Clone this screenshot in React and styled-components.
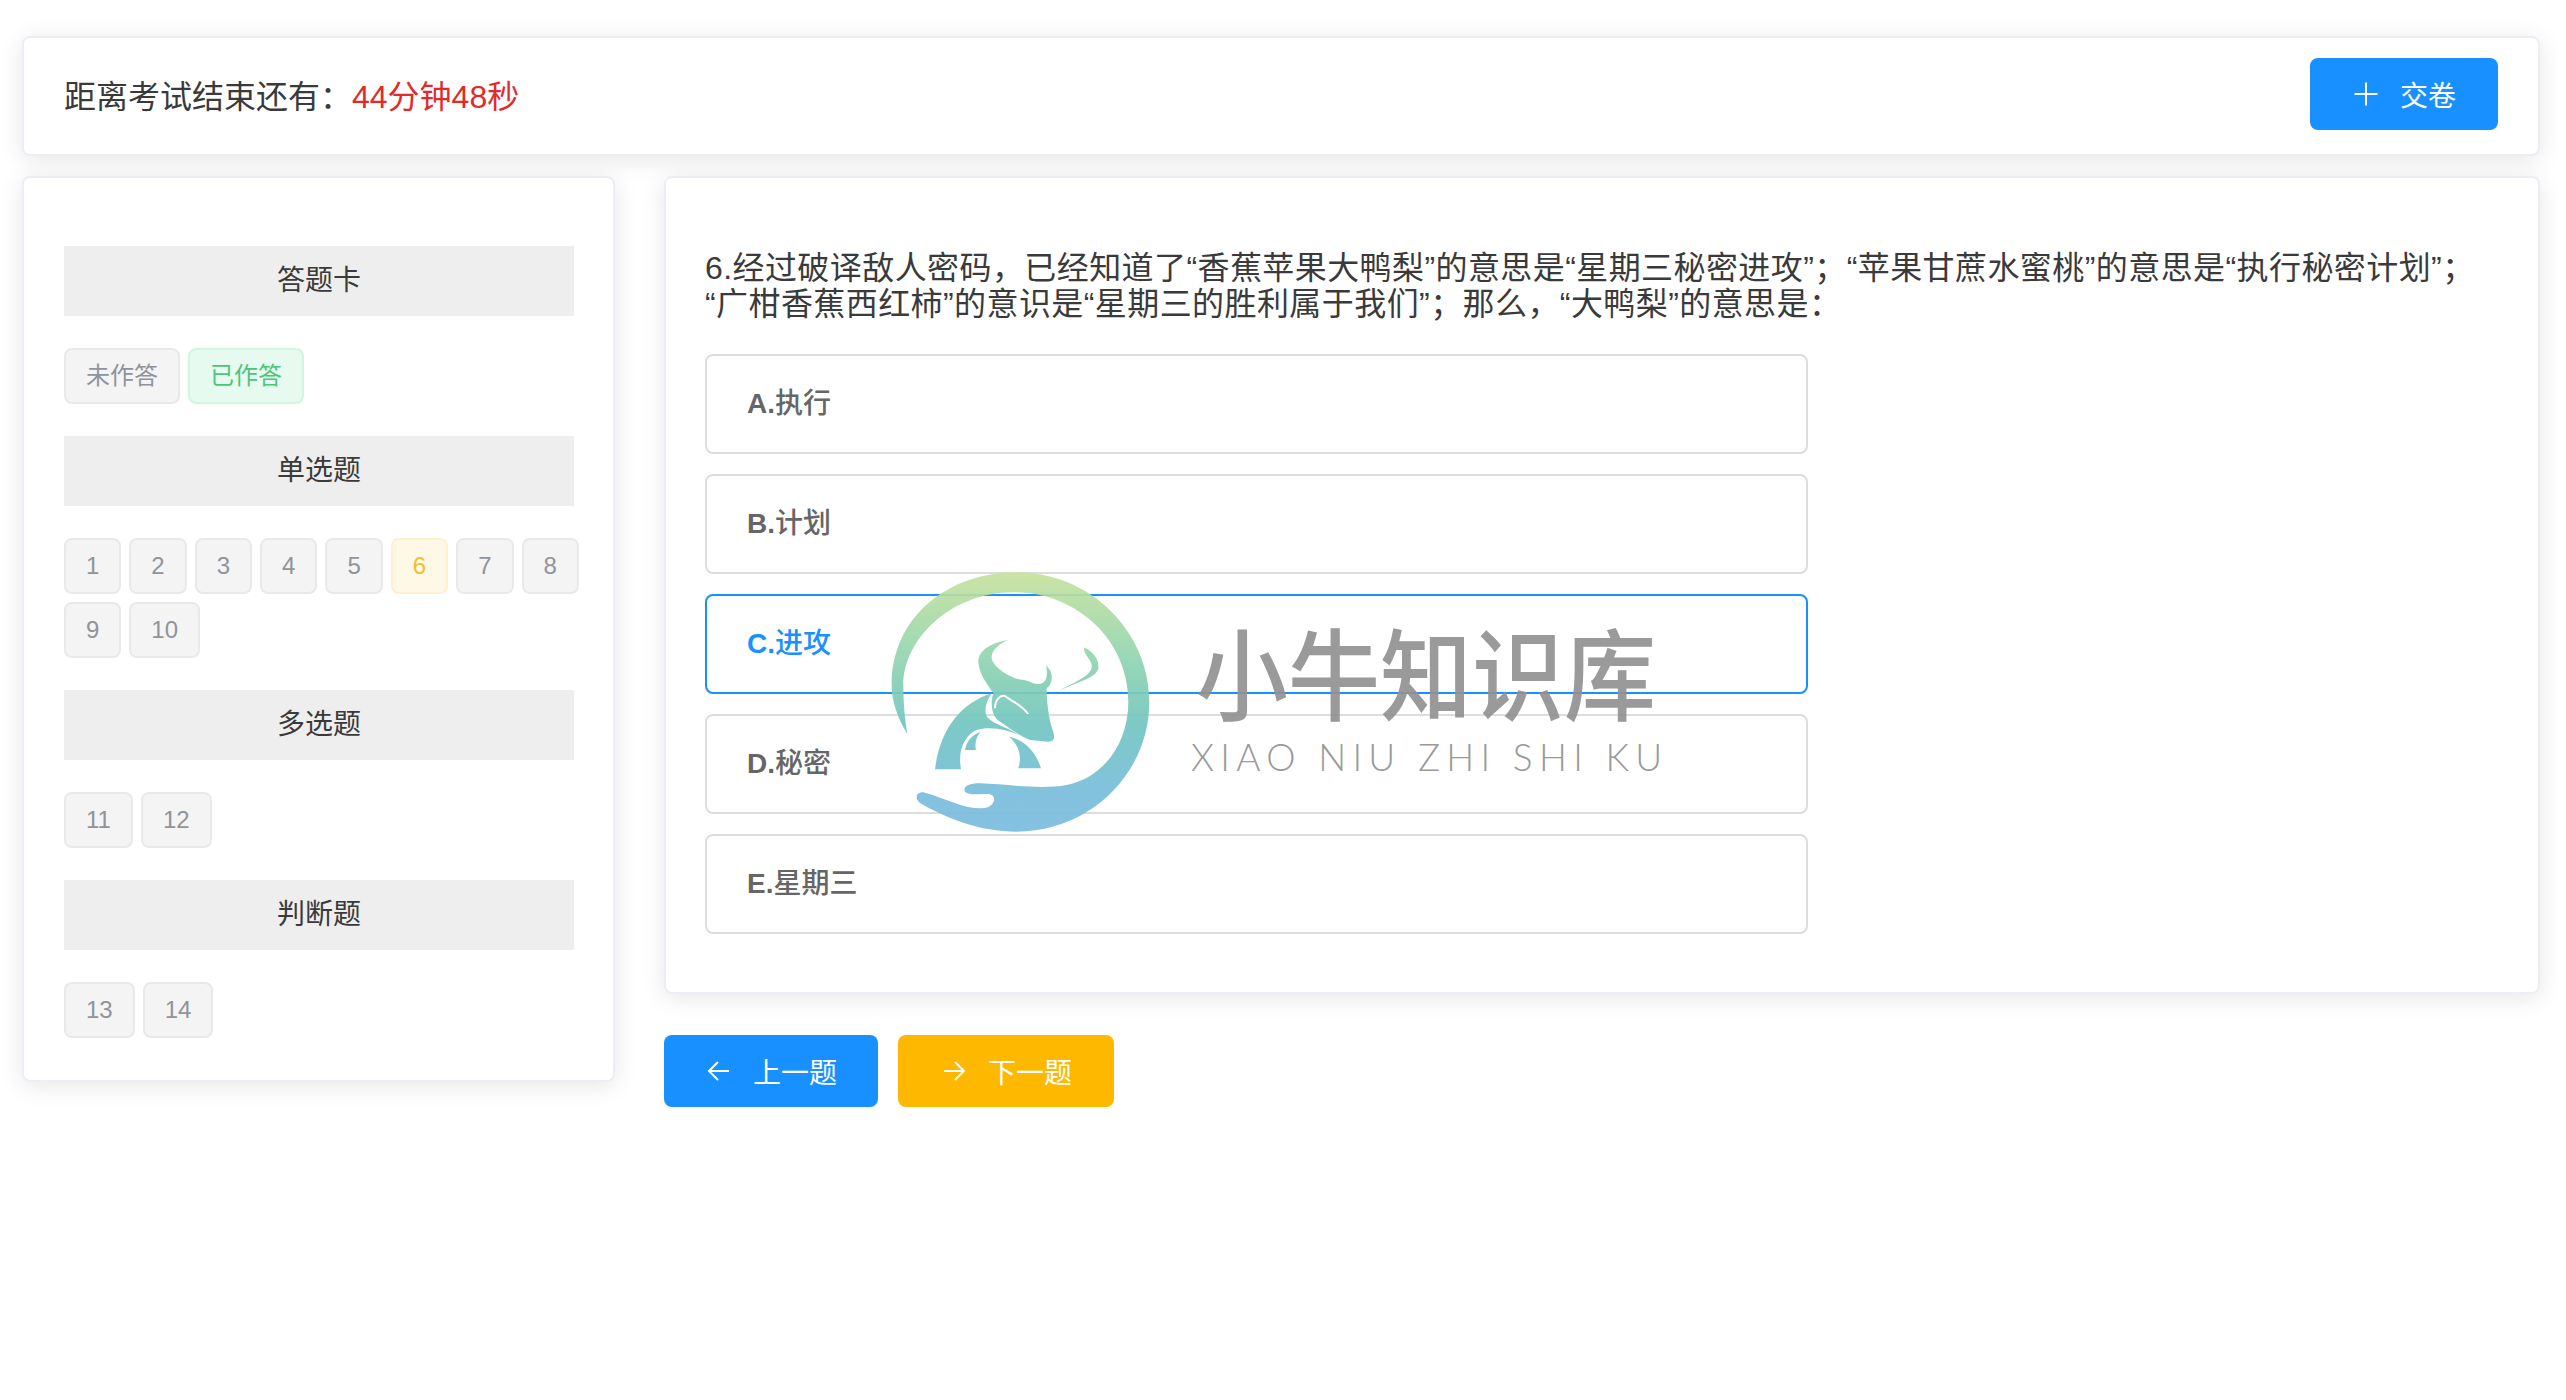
import React from "react";
import styled, { createGlobalStyle } from "styled-components";

const GlobalStyle = createGlobalStyle`
  body {
    margin: 0;
    background: #fff;
    font-family: "Liberation Sans", "Noto Sans CJK SC", sans-serif;
    color: #333;
  }
`;

const Page = styled.div`
  position: relative;
  height: 1400px;
  padding: 36px 26px 0 22px;
  box-sizing: border-box;
  overflow: hidden;
`;

const Card = styled.section`
  box-sizing: border-box;
  background: #fff;
  border: 2px solid #ebeef5;
  border-radius: 8px;
  box-shadow: 0 4px 24px rgba(0, 0, 0, 0.1);
`;

const Header = styled(Card)`
  height: 120px;
  padding: 20px 40px 0;
  display: flex;
  align-items: flex-start;
  justify-content: space-between;
`;

const Countdown = styled.div`
  padding-top: 3px;
  font-size: 32px;
  line-height: 72px;
  color: #3a3a3a;
`;

const Remaining = styled.span`
  color: #e32a2a;
`;

const Main = styled.div`
  display: grid;
  grid-template-columns: 593px 1876px;
  column-gap: 49px;
  margin-top: 20px;
  align-items: start;
`;

const Sidebar = styled(Card)`
  padding: 68px 39px 42px 40px;
  display: flex;
  flex-direction: column;
  gap: 32px;
`;

const SectionTitle = styled.div`
  height: 70px;
  line-height: 70px;
  background: #eee;
  text-align: center;
  font-size: 28px;
  color: #3a3a3a;
`;

const TagRow = styled.div`
  display: flex;
  flex-wrap: wrap;
  gap: 8px;
  margin-right: -10px;
`;

const tagColors = {
  info: { bg: "#f4f4f5", border: "#e9e9eb", color: "#909399" },
  success: { bg: "#e7faf0", border: "#d0f5e0", color: "#4cc47a" },
  warning: { bg: "#fff8e6", border: "#fff1cc", color: "#ecc035" },
};

const Tag = styled.span`
  box-sizing: border-box;
  height: 56px;
  line-height: 52px;
  padding: 0 20px;
  font-size: 24px;
  border-radius: 8px;
  border: 2px solid ${(p) => tagColors[p.$kind || "info"].border};
  background: ${(p) => tagColors[p.$kind || "info"].bg};
  color: ${(p) => tagColors[p.$kind || "info"].color};
`;

const Content = styled.div`
  display: flex;
  flex-direction: column;
`;

const QuestionCard = styled(Card)`
  height: 818px;
  padding: 72px 39px 0;
`;

const Question = styled.p`
  margin: 0 0 32px;
  font-size: 32px;
  line-height: 36px;
  letter-spacing: 0.42px;
  color: #3a3a3a;
`;

const Options = styled.div`
  display: flex;
  flex-direction: column;
  gap: 20px;
  width: 1103px;
`;

const Option = styled.div`
  box-sizing: border-box;
  height: 100px;
  line-height: 96px;
  padding: 0 40px;
  font-size: 28px;
  font-weight: 500;
  border-radius: 8px;
  border: 2px solid ${(p) => (p.$active ? "#1890ff" : "#ddd")};
  color: ${(p) => (p.$active ? "#1890ff" : "#666")};
`;

const OptionKey = styled.span`
  font-weight: 700;
`;

const NavRow = styled.div`
  display: flex;
  gap: 20px;
  margin-top: 41px;
`;

const Button = styled.button`
  height: 72px;
  padding: 0 ${(p) => p.$pad || 42}px;
  display: inline-flex;
  align-items: center;
  gap: 20px;
  border: 0;
  border-radius: 8px;
  background: ${(p) => p.$bg || "#1890ff"};
  color: #fff;
  font-family: inherit;
  font-size: 28px;
`;

const Watermark = styled.div`
  position: absolute;
  left: 880px;
  top: 560px;
  display: flex;
  gap: 31px;
  opacity: 0.92;
  pointer-events: none;
`;

const BrandText = styled.div`
  width: 480px;
  padding-top: 60px;
  color: #929292;
`;

const BrandName = styled.div`
  margin-left: 5px;
  font-size: 100px;
  font-weight: 500;
  line-height: 116px;
  white-space: nowrap;
  transform: scaleX(0.92);
  transform-origin: left center;
`;

const BrandLatin = styled.div`
  margin-top: -1px;
  font-family: Lato, sans-serif;
  font-weight: 300;
  font-size: 37px;
  line-height: 44px;
  letter-spacing: 6.3px;
  white-space: nowrap;
`;

const Icon = ({ d }) => (
  <svg width="28" height="28" viewBox="0 0 28 28" fill="none" stroke="currentColor" strokeWidth="2">
    <path d={d} />
  </svg>
);

const Logo = () => (
  <svg width="280" height="280" viewBox="0 0 840 840">
    <defs>
      <linearGradient id="logoFill" gradientUnits="userSpaceOnUse" x1="0" y1="37" x2="0" y2="815">
        <stop offset="0" stopColor="#c7e29c" />
        <stop offset="0.32" stopColor="#93d5b0" />
        <stop offset="0.58" stopColor="#72c6c0" />
        <stop offset="0.85" stopColor="#79bddc" />
        <stop offset="1" stopColor="#7bbce0" />
      </linearGradient>
    </defs>
    <g fill="url(#logoFill)">
      <path d="M82 522C50 470 35 420 35 375C35 170 205 37 410 37C630 37 808 215 808 425C808 640 630 815 410 815C300 815 200 775 125 732C100 718 108 692 135 698C190 712 245 745 305 745C345 745 355 705 325 702C300 700 270 708 255 695C248 680 265 670 300 670C380 672 480 690 560 675C680 650 745 540 745 425C745 240 590 97 400 97C210 97 70 240 70 375C70 430 75 480 82 522Z" />
      <path d="M165 628L243 628C232 570 255 525 290 510C330 497 385 510 415 525C390 505 345 495 325 475C310 460 315 430 335 400C240 430 180 510 165 628Z" />
      <path d="M385 240C335 248 295 270 295 305C297 345 325 375 340 400C330 430 335 470 360 485C385 500 420 530 450 540L505 545C525 545 525 530 518 510C505 475 500 420 500 385C515 375 520 350 510 330L498 315C505 345 500 372 475 372C455 372 445 360 430 360C400 360 340 325 335 295C333 270 360 250 385 240Z" />
      <path d="M255 570C258 545 275 525 302 515C285 535 285 555 288 570Z" />
      <path d="M388 530C435 540 470 580 483 625L415 625C425 590 420 560 388 530Z" />
      <path d="M612 262C640 275 658 300 655 325C650 355 590 365 533 396C570 370 640 350 635 315C632 295 610 285 612 262Z" />
    </g>
    <path d="M345 445C345 420 360 405 375 408C395 425 420 430 445 462" fill="none" stroke="#fff" strokeWidth="6" />
  </svg>
);

const singles = [1, 2, 3, 4, 5, 6, 7, 8, 9, 10];
const options = [
  ["A.", "执行"],
  ["B.", "计划"],
  ["C.", "进攻"],
  ["D.", "秘密"],
  ["E.", "星期三"],
];

export default function App() {
  return (
    <Page>
      <GlobalStyle />
      <Header>
        <Countdown>
          距离考试结束还有：<Remaining>44分钟48秒</Remaining>
        </Countdown>
        <Button>
          <Icon d="M14 2.5v23M2.5 14h23" />
          交卷
        </Button>
      </Header>
      <Main>
        <Sidebar>
          <SectionTitle>答题卡</SectionTitle>
          <TagRow>
            <Tag>未作答</Tag>
            <Tag $kind="success">已作答</Tag>
          </TagRow>
          <SectionTitle>单选题</SectionTitle>
          <TagRow>
            {singles.map((n) => (
              <Tag key={n} $kind={n === 6 ? "warning" : "info"}>
                {n}
              </Tag>
            ))}
          </TagRow>
          <SectionTitle>多选题</SectionTitle>
          <TagRow>
            <Tag>11</Tag>
            <Tag>12</Tag>
          </TagRow>
          <SectionTitle>判断题</SectionTitle>
          <TagRow>
            <Tag>13</Tag>
            <Tag>14</Tag>
          </TagRow>
        </Sidebar>
        <Content>
          <QuestionCard>
            <Question>
              6.经过破译敌人密码，已经知道了“香蕉苹果大鸭梨”的意思是“星期三秘密进攻”；“苹果甘蔗水蜜桃”的意思是“执行秘密计划”；
              <br />
              “广柑香蕉西红柿”的意识是“星期三的胜利属于我们”；那么，“大鸭梨”的意思是：
            </Question>
            <Options>
              {options.map(([key, label], i) => (
                <Option key={key} $active={i === 2}>
                  <OptionKey>{key}</OptionKey>
                  {label}
                </Option>
              ))}
            </Options>
          </QuestionCard>
          <NavRow>
            <Button $pad={41}>
              <Icon d="M24 14H4M13 5l-9 9 9 9" />
              上一题
            </Button>
            <Button $bg="#ffb800">
              <Icon d="M4 14h20M15 5l9 9-9 9" />
              下一题
            </Button>
          </NavRow>
        </Content>
      </Main>
      <Watermark>
        <Logo />
        <BrandText>
          <BrandName>小牛知识库</BrandName>
          <BrandLatin>XIAO NIU ZHI SHI KU</BrandLatin>
        </BrandText>
      </Watermark>
    </Page>
  );
}
